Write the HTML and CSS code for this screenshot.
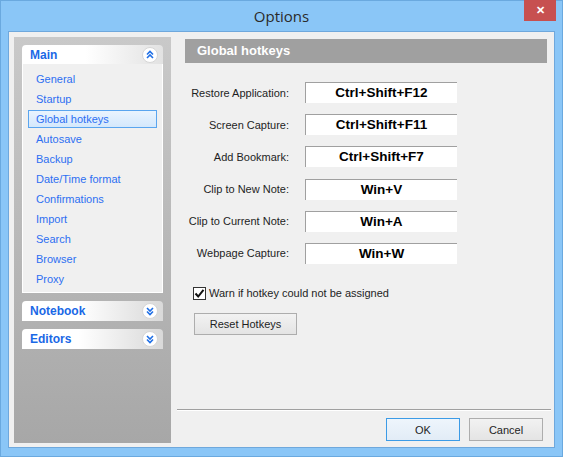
FILE: index.html
```html
<!DOCTYPE html>
<html lang="en">
<head>
  <meta charset="UTF-8" />
  <title>Options</title>
  <link rel="stylesheet" href="styles.css">
</head>
<body>

<div class="window">
  <div class="titlebar">
    <span class="title">Options</span>
    <div class="close">&#x2715;</div>
  </div>

  <div class="client">
    <div class="sidebar">
      <div class="group open">
        <div class="group-header">
          <span>Main</span>
          <svg class="chev" width="16" height="16" viewBox="0 0 16 16">
            <circle cx="8" cy="8" r="7.5" fill="#fff" stroke="#d6d6d6"/>
            <path d="M5 7.5 L8 4.5 L11 7.5 M5 11 L8 8 L11 11" fill="none" stroke="#1f6fe6" stroke-width="1.6"/>
          </svg>
        </div>
        <ul class="items">
          <li>General</li>
          <li>Startup</li>
          <li class="selected">Global hotkeys</li>
          <li>Autosave</li>
          <li>Backup</li>
          <li>Date/Time format</li>
          <li>Confirmations</li>
          <li>Import</li>
          <li>Search</li>
          <li>Browser</li>
          <li>Proxy</li>
        </ul>
      </div>
      <div class="group">
        <div class="group-header">
          <span>Notebook</span>
          <svg class="chev" width="16" height="16" viewBox="0 0 16 16">
            <circle cx="8" cy="8" r="7.5" fill="#fff" stroke="#d6d6d6"/>
            <path d="M5 5 L8 8 L11 5 M5 8.5 L8 11.5 L11 8.5" fill="none" stroke="#1f6fe6" stroke-width="1.6"/>
          </svg>
        </div>
      </div>
      <div class="group">
        <div class="group-header">
          <span>Editors</span>
          <svg class="chev" width="16" height="16" viewBox="0 0 16 16">
            <circle cx="8" cy="8" r="7.5" fill="#fff" stroke="#d6d6d6"/>
            <path d="M5 5 L8 8 L11 5 M5 8.5 L8 11.5 L11 8.5" fill="none" stroke="#1f6fe6" stroke-width="1.6"/>
          </svg>
        </div>
      </div>
    </div>

    <div class="main">
      <div class="page-header">Global hotkeys</div>

      <div class="hotkeys">
        <div class="row"><label>Restore Application:</label><div class="key">Ctrl+Shift+F12</div></div>
        <div class="row"><label>Screen Capture:</label><div class="key">Ctrl+Shift+F11</div></div>
        <div class="row"><label>Add Bookmark:</label><div class="key">Ctrl+Shift+F7</div></div>
        <div class="row"><label>Clip to New Note:</label><div class="key">Win+V</div></div>
        <div class="row"><label>Clip to Current Note:</label><div class="key">Win+A</div></div>
        <div class="row"><label>Webpage Capture:</label><div class="key">Win+W</div></div>
      </div>

      <div class="check">
        <span class="box">
          <svg width="11" height="11" viewBox="0 0 11 11">
            <path d="M1.5 5.5 L4.2 8.5 L9.5 1.8" fill="none" stroke="#111" stroke-width="2"/>
          </svg>
        </span>
        <span>Warn if hotkey could not be assigned</span>
      </div>

      <div class="reset-wrap">
        <button class="btn reset">Reset Hotkeys</button>
      </div>

      <div class="footer">
        <button class="btn default">OK</button>
        <button class="btn">Cancel</button>
      </div>
    </div>
  </div>
</div>

</body>
</html>
```

FILE: styles.css
```css
* {
  box-sizing: border-box;
  margin: 0;
  padding: 0;
}

body {
  width: 563px;
  height: 457px;
  overflow: hidden;
  font-family: 'Liberation Sans', Arial, sans-serif;
  font-size: 12px;
  color: #1e1e1e;
}

.window {
  width: 563px;
  height: 457px;
  background: #8ac6f7;
  border: 1px solid #6aa9df;
  display: flex;
  flex-direction: column;
  padding: 0 7px 8px 7px;
  position: relative;
}

.titlebar {
  height: 30px;
  display: flex;
  align-items: center;
  justify-content: center;
}

.title {
  font-family: 'Open Sans', sans-serif;
  font-size: 15px;
  color: #2a2a2a;
  margin-top: -1px;
}

.close {
  position: absolute;
  top: -1px;
  right: 6px;
  width: 32px;
  height: 21px;
  background: #c75050;
  color: #fff;
  font-size: 11px;
  font-weight: bold;
  display: flex;
  align-items: center;
  justify-content: center;
}

.client {
  flex: 1;
  background: #f0f0f0;
  border: 1px solid #6fa8dc;
  display: flex;
  padding: 5px 0 4px 5px;
}

/* left navigation */
.sidebar {
  width: 157px;
  background: linear-gradient(#c9c9c9, #a7a7a7);
  padding: 8px 8px;
  display: flex;
  flex-direction: column;
  gap: 8px;
}

.group-header {
  height: 19px;
  display: flex;
  align-items: center;
  justify-content: space-between;
  padding: 0 5px 0 8px;
  background: linear-gradient(to right, #fff 45%, #e2e2e2);
  border-radius: 4px 4px 0 0;
  font-weight: bold;
  font-size: 12px;
  color: #1a68e6;
}

.group:not(.open) .group-header {
  height: 20px;
  background: linear-gradient(to right, #fff 40%, #d9d9d9);
}

.chev {
  display: block;
}

.items {
  list-style: none;
  background: #f0f0f0;
  border: 1px solid #fff;
  border-top: none;
  padding: 5px 5px 3px 5px;
}

.items li {
  height: 20px;
  line-height: 18px;
  padding-left: 7px;
  font-size: 11px;
  color: #2d6ff2;
  border: 1px solid transparent;
}

.items li.selected {
  background: linear-gradient(#eaf4fe, #d4e8fc);
  border-color: #5aa5ef;
  height: 18px;
  line-height: 16px;
  margin: 1px 0;
}

/* right page */
.main {
  flex: 1;
  display: flex;
  flex-direction: column;
  padding: 1px 3px 0 6px;
}

.page-header {
  height: 24px;
  margin: 1px 4px 0 8px;
  background: #a0a0a0;
  color: #fff;
  font-weight: bold;
  font-size: 13px;
  line-height: 24px;
  padding-left: 12px;
}

.hotkeys {
  display: flex;
  flex-direction: column;
  gap: 11.2px;
  margin-top: 19px;
}

.row {
  display: flex;
  align-items: center;
}

.row label {
  width: 112px;
  text-align: right;
  font-size: 11px;
  color: #1e1e1e;
}

.key {
  margin-left: 16px;
  width: 152px;
  height: 21px;
  background: #fff;
  border-top: 1px solid #a0a0a0;
  border-left: 1px solid #a0a0a0;
  font-weight: bold;
  font-size: 13.5px;
  text-align: center;
  line-height: 19px;
  color: #000;
}

.check {
  display: flex;
  align-items: center;
  gap: 3px;
  margin: 23px 0 0 16px;
  font-size: 11px;
}

.box {
  width: 13px;
  height: 13px;
  border: 1px solid #333;
  background: #fff;
  display: flex;
  align-items: center;
  justify-content: center;
}

.reset-wrap {
  margin: 13px 0 0 17px;
  flex: 1;
}

.btn {
  font-family: 'Liberation Sans', Arial, sans-serif;
  font-size: 11px;
  color: #1e1e1e;
  background: linear-gradient(#f2f2f2, #e4e4e4);
  border: 1px solid #adadad;
  height: 23px;
  width: 74px;
}

.reset {
  width: 103px;
  height: 22px;
}

.footer {
  border-top: 1px solid #a0a0a0;
  box-shadow: inset 0 1px 0 #fff;
  display: flex;
  justify-content: flex-end;
  gap: 9px;
  padding: 8px 8px 2px 0;
}

.btn.default {
  border-color: #3c9be6;
  background: linear-gradient(#eef5fc, #e2ecf6);
}
```
